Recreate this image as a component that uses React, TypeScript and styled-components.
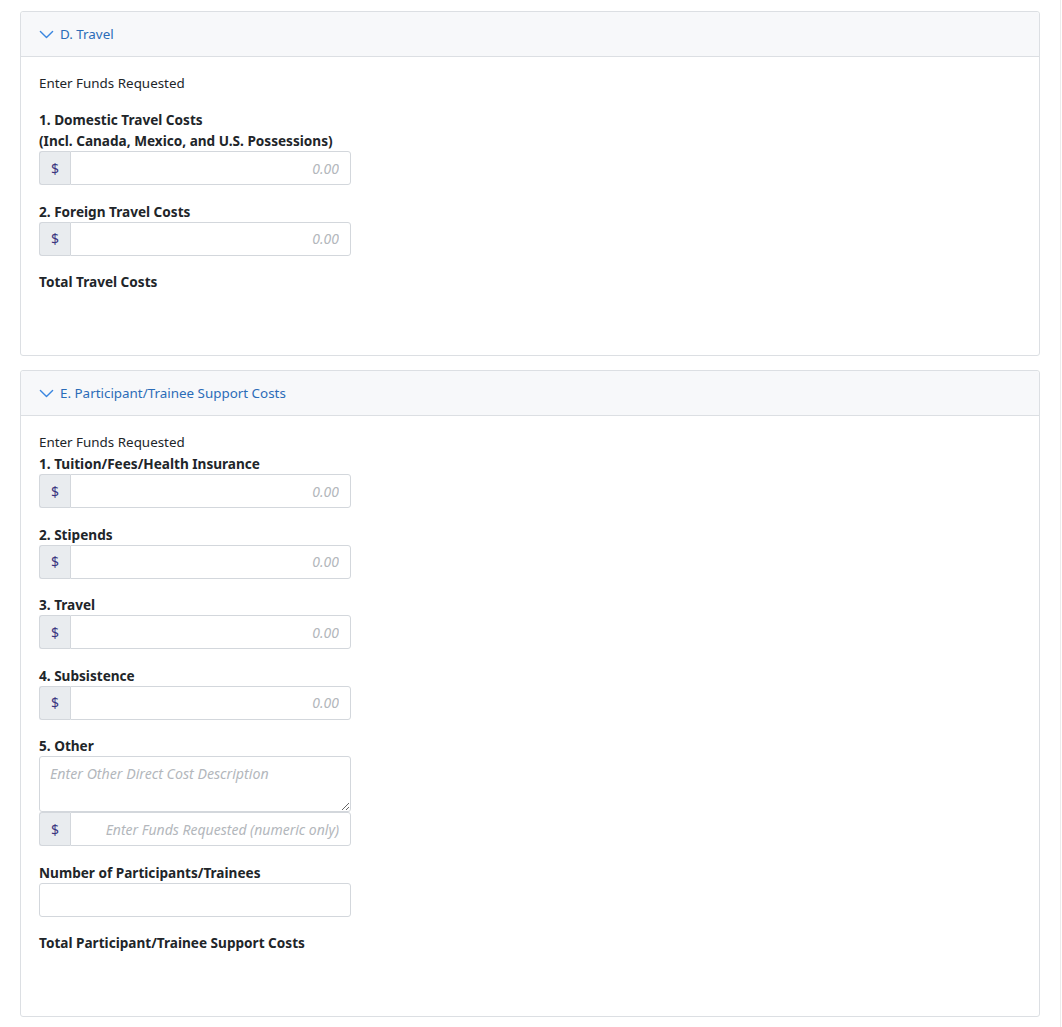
import styled, { createGlobalStyle } from "styled-components";

const GlobalStyle = createGlobalStyle`
  body {
    margin: 0;
    background: #fff;
    font-family: "Noto Sans", "Open Sans", sans-serif;
    color: #212529;
  }
`;

const travelFields = [
  { label: "1. Domestic Travel Costs", sub: "(Incl. Canada, Mexico, and U.S. Possessions)" },
  { label: "2. Foreign Travel Costs" },
];

const supportFields = [
  { label: "1. Tuition/Fees/Health Insurance" },
  { label: "2. Stipends" },
  { label: "3. Travel" },
  { label: "4. Subsistence" },
];

function Chevron() {
  return (
    <svg width="15" height="15" viewBox="0 0 16 16" fill="none">
      <path d="M1.5 4.8L8 11.2l6.5-6.4" stroke="#3a86e0" strokeWidth="1.5" strokeLinecap="round" strokeLinejoin="round" />
    </svg>
  );
}

function MoneyInput({ placeholder = "0.00" }: { placeholder?: string }) {
  return (
    <InputGroup>
      <Prefix>$</Prefix>
      <Input placeholder={placeholder} />
    </InputGroup>
  );
}

export default function App() {
  return (
    <Page>
      <GlobalStyle />
      <Card>
        <Header>
          <Chevron />
          <span>D. Travel</span>
        </Header>
        <Body>
          <Intro $spaced>Enter Funds Requested</Intro>
          {travelFields.map((f) => (
            <Field key={f.label}>
              <Label>
                {f.label}
                {f.sub && <br />}
                {f.sub}
              </Label>
              <MoneyInput />
            </Field>
          ))}
          <Label>Total Travel Costs</Label>
        </Body>
      </Card>

      <Card>
        <Header>
          <Chevron />
          <span>E. Participant/Trainee Support Costs</span>
        </Header>
        <Body>
          <Intro>Enter Funds Requested</Intro>
          {supportFields.map((f) => (
            <Field key={f.label}>
              <Label>{f.label}</Label>
              <MoneyInput />
            </Field>
          ))}
          <Field>
            <Label>5. Other</Label>
            <TextArea placeholder="Enter Other Direct Cost Description" />
            <MoneyInput placeholder="Enter Funds Requested (numeric only)" />
          </Field>
          <Field>
            <Label>Number of Participants/Trainees</Label>
            <PlainInput />
          </Field>
          <Label>Total Participant/Trainee Support Costs</Label>
        </Body>
      </Card>
    </Page>
  );
}

const Page = styled.div`
  width: 1061px;
  min-height: 1027px;
  box-sizing: border-box;
  border-right: 1px solid #ececec;
  padding: 11px 20px 10px 20px;
  display: flex;
  flex-direction: column;
  gap: 14px;
`;

const Card = styled.section`
  border: 1px solid #dcdfe3;
  border-radius: 3px;
  background: #fff;
`;

const Header = styled.div`
  height: 45px;
  box-sizing: border-box;
  padding: 0 18px;
  display: flex;
  align-items: center;
  gap: 6px;
  background: #f7f8fa;
  border-bottom: 1px solid #dcdfe3;
  border-radius: 3px 3px 0 0;
  color: #2b6cb8;
  font-size: 13.4px;
`;

const Body = styled.div`
  padding: 16px 18px 63px;
  display: flex;
  flex-direction: column;
`;

const Intro = styled.div<{ $spaced?: boolean }>`
  font-size: 13.4px;
  line-height: 21px;
  margin-bottom: ${(p) => (p.$spaced ? "15px" : "0")};
`;

const Field = styled.div`
  display: flex;
  flex-direction: column;
  margin-bottom: 15.5px;
`;

const Label = styled.label`
  font-size: 13.6px;
  font-weight: 700;
  line-height: 21px;
  color: #212529;
`;

const InputGroup = styled.div`
  display: flex;
  width: 312px;
  height: 34px;
  box-sizing: border-box;
`;

const Prefix = styled.span`
  width: 30px;
  flex: none;
  display: flex;
  align-items: center;
  justify-content: center;
  background: #e9ecef;
  border: 1px solid #d3d7dc;
  border-right: none;
  border-radius: 3px 0 0 3px;
  color: #3a3580;
  font-size: 14px;
`;

const Input = styled.input`
  flex: 1;
  min-width: 0;
  box-sizing: border-box;
  border: 1px solid #d3d7dc;
  border-radius: 0 3px 3px 0;
  padding: 0 11px;
  text-align: right;
  font-family: inherit;
  font-size: 14px;
  &::placeholder {
    color: #b3b7bc;
    font-style: italic;
  }
`;

const TextArea = styled.textarea`
  width: 312px;
  height: 56px;
  box-sizing: border-box;
  border: 1px solid #d3d7dc;
  border-radius: 3px;
  padding: 7px 10px;
  font-family: inherit;
  font-size: 14.2px;
  resize: vertical;
  margin: 0;
  display: block;
  &::placeholder {
    color: #b3b7bc;
    font-style: italic;
  }
`;

const PlainInput = styled.input`
  width: 312px;
  height: 34px;
  box-sizing: border-box;
  border: 1px solid #d3d7dc;
  border-radius: 3px;
  font-family: inherit;
  font-size: 14px;
`;
